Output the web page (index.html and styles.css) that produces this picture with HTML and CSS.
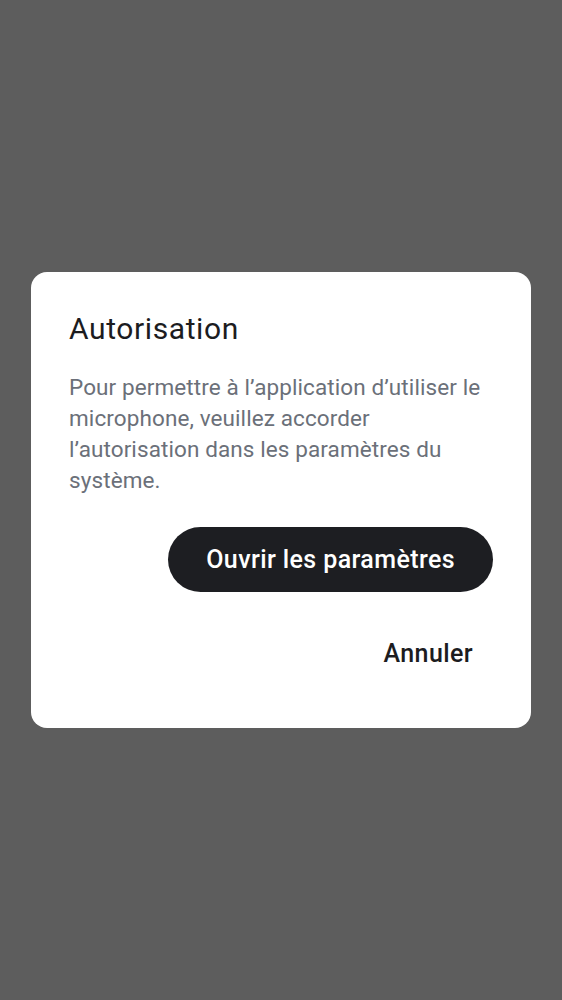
FILE: index.html
```html
<!DOCTYPE html>
<html lang="fr">
<head>
<meta charset="utf-8">
<link rel="stylesheet" href="styles.css">
</head>
<body>
<div class="scrim">
  <div class="dialog">
    <h1 class="title">Autorisation</h1>
    <p class="message">Pour permettre à l’application d’utiliser le microphone, veuillez accorder l’autorisation dans les paramètres du système.</p>
    <div class="actions">
      <button class="btn-primary">Ouvrir les paramètres</button>
      <button class="btn-text">Annuler</button>
    </div>
  </div>
</div>
</body>
</html>
```
FILE: styles.css
```css
html, body {
  margin: 0;
  padding: 0;
  height: 100%;
}
body {
  background: #5d5d5d;
  font-family: Roboto, "Noto Sans", sans-serif;
}
.scrim {
  height: 100%;
  display: flex;
  align-items: center;
  justify-content: center;
}
.dialog {
  width: 500px;
  box-sizing: border-box;
  background: #ffffff;
  border-radius: 16px;
  padding: 37px 38px 42px 38px;
}
.title {
  margin: 0;
  font-size: 30px;
  font-weight: 400;
  line-height: 40px;
  letter-spacing: 0.6px;
  color: #1c1c1f;
}
.message {
  margin: 23px 0 0 0;
  font-size: 22.5px;
  line-height: 31px;
  letter-spacing: 0.1px;
  color: #6b7079;
}
.actions {
  margin-top: 31px;
  display: flex;
  flex-direction: column;
  align-items: flex-end;
  gap: 29px;
}
.btn-primary {
  height: 65px;
  padding: 0 38px;
  border: none;
  border-radius: 33px;
  background: #1d1e22;
  color: #ffffff;
  font-family: Roboto, sans-serif;
  font-size: 25px;
  font-weight: 500;
  letter-spacing: 0.4px;
}
.btn-text {
  height: 65px;
  padding: 0 20px;
  border: none;
  background: transparent;
  color: #1c1c1f;
  font-family: Roboto, sans-serif;
  font-size: 25px;
  font-weight: 500;
  letter-spacing: 0.4px;
}
```
